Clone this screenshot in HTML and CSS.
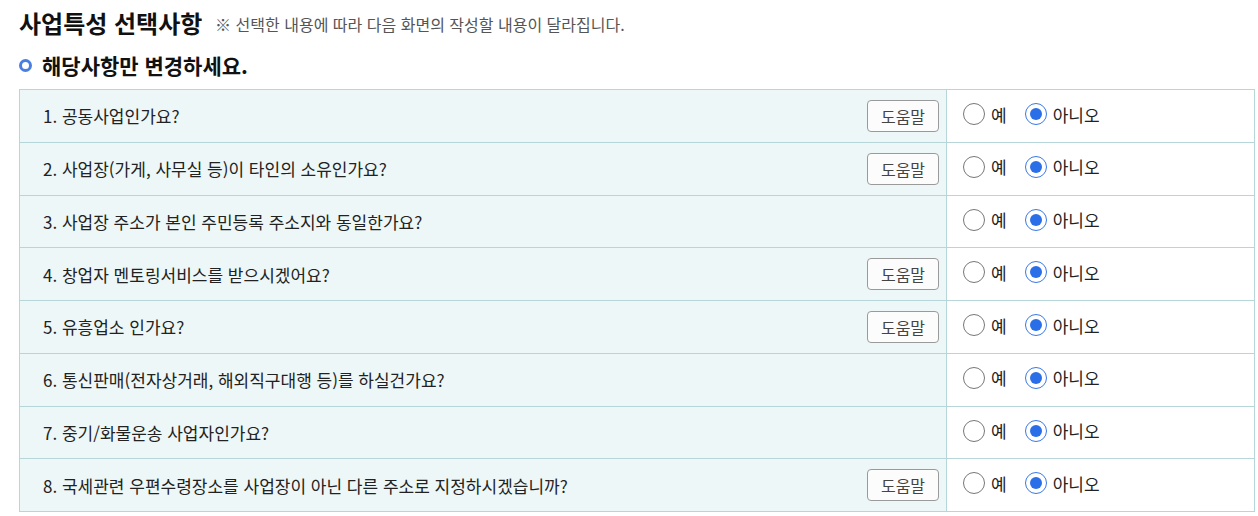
FILE: index.html
```html
<!DOCTYPE html>
<html lang="ko">
<head>
  <meta charset="UTF-8">
  <title>사업특성 선택사항</title>
  <link rel="stylesheet" href="styles.css">
</head>
<body>
  <div class="wrap">
    <h2 class="title">사업특성 선택사항 <span class="note">※ 선택한 내용에 따라 다음 화면의 작성할 내용이 달라집니다.</span></h2>
    <h3 class="sub"><span class="ring"></span>해당사항만 변경하세요.</h3>
    <table class="qs">
      <tr>
        <th><div class="q"><span>1. 공동사업인가요?</span><button class="help">도움말</button></div></th>
        <td><label class="rb"><span class="dot"></span>예</label><label class="rb on"><span class="dot"></span>아니오</label></td>
      </tr>
      <tr>
        <th><div class="q"><span>2. 사업장(가게, 사무실 등)이 타인의 소유인가요?</span><button class="help">도움말</button></div></th>
        <td><label class="rb"><span class="dot"></span>예</label><label class="rb on"><span class="dot"></span>아니오</label></td>
      </tr>
      <tr>
        <th><div class="q"><span>3. 사업장 주소가 본인 주민등록 주소지와 동일한가요?</span></div></th>
        <td><label class="rb"><span class="dot"></span>예</label><label class="rb on"><span class="dot"></span>아니오</label></td>
      </tr>
      <tr>
        <th><div class="q"><span>4. 창업자 멘토링서비스를 받으시겠어요?</span><button class="help">도움말</button></div></th>
        <td><label class="rb"><span class="dot"></span>예</label><label class="rb on"><span class="dot"></span>아니오</label></td>
      </tr>
      <tr>
        <th><div class="q"><span>5. 유흥업소 인가요?</span><button class="help">도움말</button></div></th>
        <td><label class="rb"><span class="dot"></span>예</label><label class="rb on"><span class="dot"></span>아니오</label></td>
      </tr>
      <tr>
        <th><div class="q"><span>6. 통신판매(전자상거래, 해외직구대행 등)를 하실건가요?</span></div></th>
        <td><label class="rb"><span class="dot"></span>예</label><label class="rb on"><span class="dot"></span>아니오</label></td>
      </tr>
      <tr>
        <th><div class="q"><span>7. 중기/화물운송 사업자인가요?</span></div></th>
        <td><label class="rb"><span class="dot"></span>예</label><label class="rb on"><span class="dot"></span>아니오</label></td>
      </tr>
      <tr>
        <th><div class="q"><span>8. 국세관련 우편수령장소를 사업장이 아닌 다른 주소로 지정하시겠습니까?</span><button class="help">도움말</button></div></th>
        <td><label class="rb"><span class="dot"></span>예</label><label class="rb on"><span class="dot"></span>아니오</label></td>
      </tr>
    </table>
  </div>
</body>
</html>
```
FILE: styles.css
```css
body {
  margin: 0;
  font-family: "Noto Sans CJK KR", "Noto Sans", sans-serif;
  color: #222;
  background: #fff;
}
.wrap {
  padding: 4px 3px 0 19px;
}
.title {
  margin: 0;
  font-size: 24px;
  font-weight: 700;
  color: #111;
  line-height: 38px;
}
.note {
  margin-left: 6px;
  font-size: 16px;
  font-weight: 400;
  color: #555;
  vertical-align: 2px;
}
.sub {
  margin: 8px 0 10px;
  font-size: 21px;
  font-weight: 700;
  color: #111;
  line-height: 28px;
  display: flex;
  align-items: center;
}
.ring {
  width: 7px;
  height: 7px;
  border: 3px solid #4a7fe0;
  border-radius: 50%;
  margin-right: 10px;
}
.qs {
  width: 100%;
  border-collapse: collapse;
  border: 1px solid #b7d6da;
}
.qs th, .qs td {
  border: 1px solid #b7d6da;
  height: 51.75px;
  padding: 0;
}
.qs th {
  width: 926px;
  background: #edf7f7;
  font-weight: 400;
  text-align: left;
}
.q {
  display: flex;
  align-items: center;
  justify-content: space-between;
  padding: 0 7px 0 23px;
  font-size: 17px;
  color: #222;
}
.help {
  width: 72px;
  height: 32px;
  border: 1px solid #9a9a9a;
  border-radius: 4px;
  background: #fcfcfc;
  font-family: inherit;
  font-size: 16px;
  color: #444;
  padding: 0;
}
.qs td {
  padding-left: 16px;
  font-size: 17px;
}
.rb {
  display: inline-flex;
  align-items: center;
  margin-right: 18px;
  color: #222;
}
.dot {
  width: 20px;
  height: 20px;
  border: 1px solid #777;
  border-radius: 50%;
  margin-right: 6px;
  position: relative;
}
.rb.on .dot {
  border-color: #3b78e7;
}
.rb.on .dot::after {
  content: "";
  position: absolute;
  left: 4px;
  top: 4px;
  width: 12px;
  height: 12px;
  border-radius: 50%;
  background: #2a6fe8;
}
```
